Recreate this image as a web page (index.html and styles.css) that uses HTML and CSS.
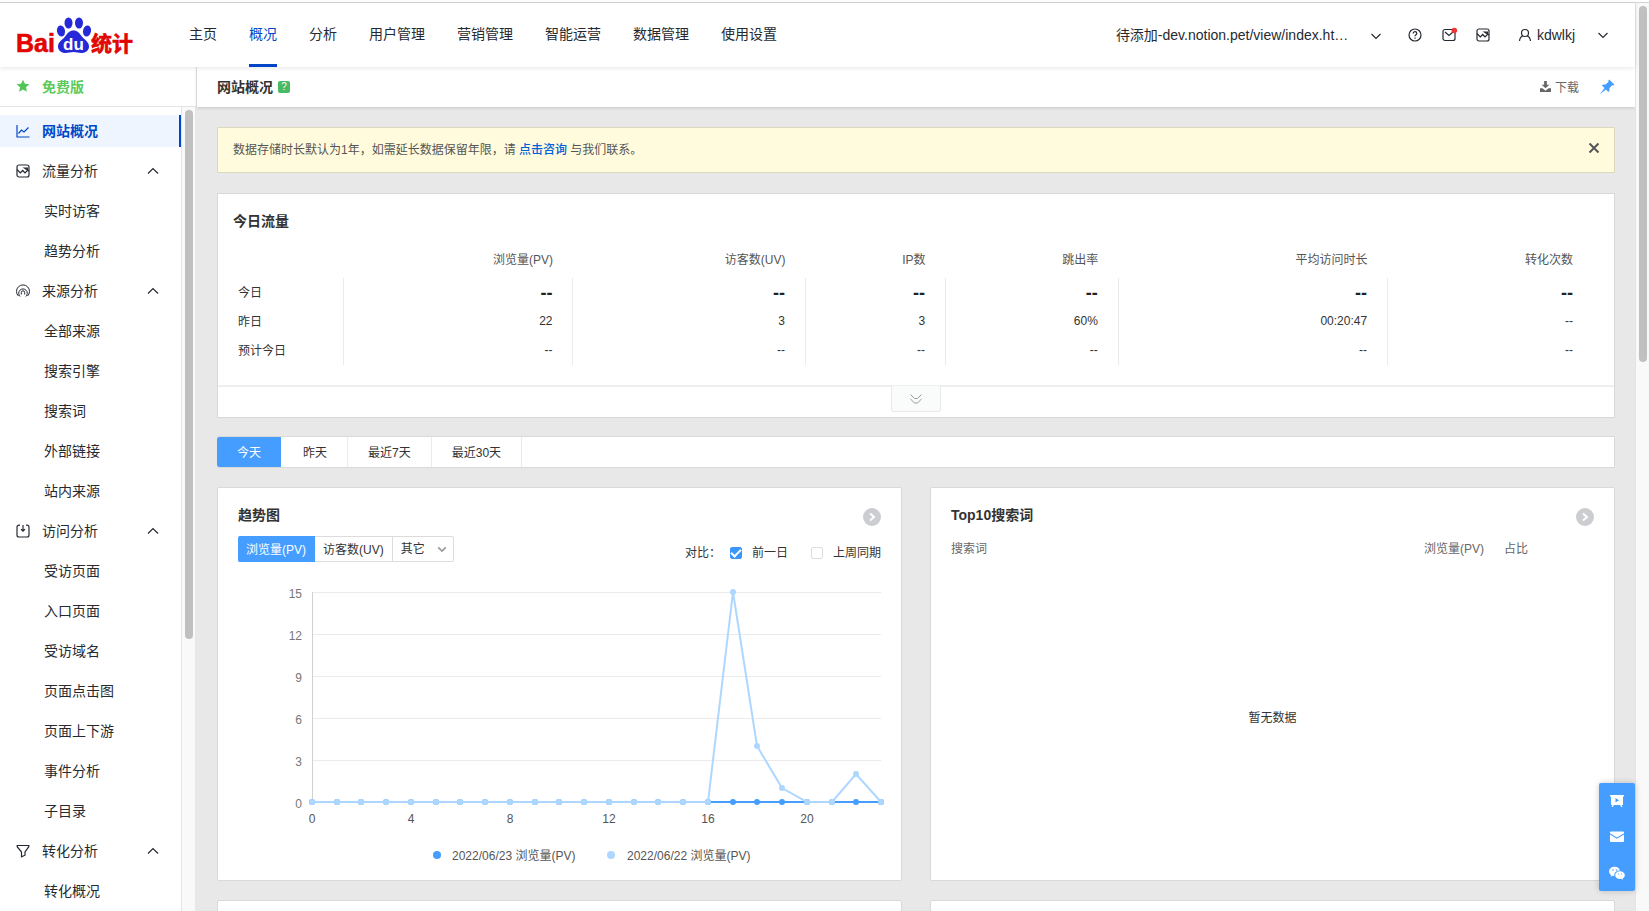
FILE: index.html
```
<!DOCTYPE html>
<html lang="zh-CN">
<head>
    <meta charset="UTF-8">
    <meta name="viewport" content="width=device-width, initial-scale=1.0">
    <title>百度统计 - 网站概况</title>
    <link rel="stylesheet" href="styles.css">
</head>
<body>
    <!-- shared icons -->
    <svg class="sprite" aria-hidden="true">
        <symbol id="up" viewBox="0 0 12 12"><path d="M1 8.500 6 3.500l5 5"/></symbol>
        <symbol id="down" viewBox="0 0 12 12"><path d="M1.500 4 6 8.500 10.500 4"/></symbol>
        <symbol id="board" viewBox="0 0 14 14"><rect x="1" y="1" width="12" height="12" rx="2"/><path d="M1 5.500l3.300 3.500 2.400-2.500L9 9l2.500-2.500V4H8.500l4.500 3"/></symbol>
    </svg>
    <div class="window">
        <div class="app">
            <header class="header">
                <a class="logo" href="#" aria-label="百度统计">
                    <svg width="124" height="46" viewBox="0 0 124 46">
                        <text class="logo-red" x="0" y="37" font-size="25">Bai</text>
                        <g fill="#2529d8">
                            <ellipse cx="45" cy="16" rx="4" ry="5.500" transform="rotate(-12 45 16)"/>
                            <ellipse cx="52.500" cy="8" rx="4" ry="5.500"/>
                            <ellipse cx="63" cy="8" rx="4" ry="5.500"/>
                            <ellipse cx="71" cy="16" rx="4" ry="5.500" transform="rotate(12 71 16)"/>
                            <path d="M57.500 15.500c4 0 6 2.500 8 5.500 2.500 3.500 7.500 5.500 7.500 10.500 0 4-3.500 6.500-7.500 6.500-3 0-5-1-8-1s-5 1-8 1c-4 0-7.500-2.500-7.500-6.500 0-5 5-7 7.500-10.500 2-3 4-5.500 8-5.500z"/>
                        </g>
                        <text class="logo-du" x="47" y="35" font-size="17">du</text>
                        <text class="logo-red" x="75" y="36" font-size="21">统计</text>
                    </svg>
                </a>
                <nav class="nav">
                    <a href="#">主页</a>
                    <a href="#" class="active">概况</a>
                    <a href="#">分析</a>
                    <a href="#">用户管理</a>
                    <a href="#">营销管理</a>
                    <a href="#">智能运营</a>
                    <a href="#">数据管理</a>
                    <a href="#">使用设置</a>
                </nav>
                <div class="tools">
                    <div class="site">
                        <select aria-label="站点"><option>待添加-dev.notion.pet/view/index.ht…</option></select>
                        <svg class="icon arrow"><use href="#down"/></svg>
                    </div>
                    <button class="tool" aria-label="帮助">
                        <svg class="icon" viewBox="0 0 14 14"><circle cx="7" cy="7" r="6"/><path d="M5.200 5.500C5.200 3 8.800 3.200 8.800 5.400 8.800 6.800 7 6.700 7 8.300M7 9.500v1.200"/></svg>
                    </button>
                    <button class="tool" aria-label="消息">
                        <svg class="icon" viewBox="0 0 14 14"><rect x="1" y="1.500" width="12" height="11" rx="2"/><path d="M3 4l4 3.500L11 4"/><circle class="red-dot" cx="12.300" cy="2.500" r="2.800"/></svg>
                    </button>
                    <button class="tool" aria-label="看板"><svg class="icon"><use href="#board"/></svg></button>
                    <button class="user">
                        <svg class="icon" viewBox="0 0 14 14"><circle cx="7" cy="5" r="3.500"/><path d="M1.500 13c.3-3 1.600-4.500 3.500-5.200M12.500 13c-.3-3-1.600-4.500-3.500-5.200"/></svg>
                        <span>kdwlkj</span>
                        <svg class="icon arrow"><use href="#down"/></svg>
                    </button>
                </div>
            </header>
            <div class="body">
                <aside class="sidebar">
                    <div class="plan">
                        <svg class="star" viewBox="0 0 14 14"><path d="M7 .8l1.900 4 4.400.5-3.300 3 .9 4.400L7 10.500l-3.900 2.200.9-4.400-3.300-3 4.400-.5z"/></svg>
                        免费版
                    </div>
                    <div class="side-scroll">
                        <nav class="menu">
                            <a href="#" class="group active"><svg class="icon" viewBox="0 0 14 14"><path d="M1 1v12h12.500M2.500 9.500l3-3.500 2.500 2 4.500-4.500"/></svg>网站概况</a>
                            <a href="#" class="group"><svg class="icon"><use href="#board"/></svg>流量分析<svg class="icon fold"><use href="#up"/></svg></a>
                            <a href="#">实时访客</a>
                            <a href="#">趋势分析</a>
                            <a href="#" class="group"><svg class="icon thin" viewBox="0 0 14 14"><path d="M2.400 12A6.500 6.500 0 1 1 11.600 12M4.200 12.500A4.300 4.300 0 1 1 9.800 12.500M5.300 10.500V8.500a1.700 1.700 0 0 1 3.400 0v2"/></svg>来源分析<svg class="icon fold"><use href="#up"/></svg></a>
                            <a href="#">全部来源</a>
                            <a href="#">搜索引擎</a>
                            <a href="#">搜索词</a>
                            <a href="#">外部链接</a>
                            <a href="#">站内来源</a>
                            <a href="#" class="group"><svg class="icon" viewBox="0 0 14 14"><path d="M4 1.200H3a2 2 0 0 0-2 2V11a2 2 0 0 0 2 2h8a2 2 0 0 0 2-2V3.200a2 2 0 0 0-2-2h-1M7 1v6M5 5.200l2 2 2-2"/></svg>访问分析<svg class="icon fold"><use href="#up"/></svg></a>
                            <a href="#">受访页面</a>
                            <a href="#">入口页面</a>
                            <a href="#">受访域名</a>
                            <a href="#">页面点击图</a>
                            <a href="#">页面上下游</a>
                            <a href="#">事件分析</a>
                            <a href="#">子目录</a>
                            <a href="#" class="group"><svg class="icon" viewBox="0 0 14 14"><path d="M1.200 1.500h11.600v1.200L9 8v3.200l-3.500 1.600V8L1.200 2.700z"/></svg>转化分析<svg class="icon fold"><use href="#up"/></svg></a>
                            <a href="#">转化概况</a>
                        </nav>
                        <div class="track"><div class="thumb"></div></div>
                    </div>
                </aside>
                <main class="main">
                    <div class="titlebar">
                        <h1>网站概况</h1>
                        <button class="help" aria-label="说明">?</button>
                        <button class="download">
                            <svg viewBox="0 0 12 12"><path d="M4.500 0h3v4h2.700L6 8 1.800 4h2.700zM0 8h2.700L6 10.500 9.300 8H12v4H0z"/></svg>
                            下载
                        </button>
                        <button class="pin" aria-label="固定">
                            <svg viewBox="0 0 16 16"><path d="M10.200.5l5.300 5.300-1.400.8-1-.3-2.700 2.900c.3 1.600 0 2.900-.9 3.900L6.800 10.400 .6 15.600 5.500 9.100 2.700 6.300c1.100-.8 2.400-1.100 4-.8l2.800-2.800-.2-1z"/></svg>
                        </button>
                    </div>
                    <div class="content">
                        <div class="notice">
                            <p>数据存储时长默认为1年，如需延长数据保留年限，请 <a href="#">点击咨询</a> 与我们联系。</p>
                            <button aria-label="关闭"><svg viewBox="0 0 12 12"><path d="M1.500 1.500l9 9M10.500 1.500l-9 9"/></svg></button>
                        </div>

                        <section class="card summary">
                            <h2>今日流量</h2>
                            <table class="flow">
                                <colgroup><col class="c-label"><col class="c-pv"><col class="c-uv"><col class="c-ip"><col class="c-bounce"><col class="c-time"><col></colgroup>
                                <thead>
                                    <tr><td></td><th>浏览量(PV)</th><th>访客数(UV)</th><th>IP数</th><th>跳出率</th><th>平均访问时长</th><th>转化次数</th></tr>
                                </thead>
                                <tbody>
                                    <tr class="today"><th>今日</th><td>--</td><td>--</td><td>--</td><td>--</td><td>--</td><td>--</td></tr>
                                    <tr><th>昨日</th><td>22</td><td>3</td><td>3</td><td>60%</td><td>00:20:47</td><td>--</td></tr>
                                    <tr><th>预计今日</th><td>--</td><td>--</td><td>--</td><td>--</td><td>--</td><td>--</td></tr>
                                </tbody>
                            </table>
                            <div class="expand">
                                <button aria-label="展开"><svg viewBox="0 0 12 12"><path d="M.5 1.500l4 4h3l4-4M.5 6l4 4h3l4-4"/></svg></button>
                            </div>
                        </section>

                        <div class="tabs">
                            <button class="active">今天</button>
                            <button>昨天</button>
                            <button>最近7天</button>
                            <button>最近30天</button>
                        </div>

                        <div class="panels">
                            <section class="card panel">
                                <div class="panel-head">
                                    <h2>趋势图</h2>
                                    <a class="more" href="#" aria-label="更多"><svg viewBox="0 0 18 18"><path d="M7 5.500l4 3.500-4 3.500"/></svg></a>
                                </div>
                                <div class="options">
                                    <div class="metrics">
                                        <button class="active">浏览量(PV)</button>
                                        <button>访客数(UV)</button>
                                        <div class="other">
                                            <select aria-label="其它指标"><option>其它</option></select>
                                            <svg class="icon"><use href="#down"/></svg>
                                        </div>
                                    </div>
                                    <div class="compare">
                                        <span>对比：</span>
                                        <label><input type="checkbox" checked>前一日</label>
                                        <label><input type="checkbox">上周同期</label>
                                    </div>
                                </div>
                                <svg class="chart" id="chart" viewBox="0 0 643 300">
                                    <g id="grid"></g>
                                    <g id="lines"></g>
                                    <circle cx="199" cy="285" r="4" fill="#459dff"/>
                                    <text x="214" y="290">2022/06/23 浏览量(PV)</text>
                                    <circle cx="373" cy="285" r="4" fill="#aed7ff"/>
                                    <text x="389" y="290">2022/06/22 浏览量(PV)</text>
                                </svg>
                            </section>
                            <section class="card panel">
                                <div class="panel-head">
                                    <h2>Top10搜索词</h2>
                                    <a class="more" href="#" aria-label="更多"><svg viewBox="0 0 18 18"><path d="M7 5.500l4 3.500-4 3.500"/></svg></a>
                                </div>
                                <table class="words">
                                    <thead><tr><th>搜索词</th><th class="w-pv">浏览量(PV)</th><th class="w-ratio">占比</th></tr></thead>
                                </table>
                                <p class="empty">暂无数据</p>
                            </section>
                            <section class="card panel"></section>
                            <section class="card panel"></section>
                        </div>
                    </div>
                </main>
            </div>
            <div class="float">
                <button aria-label="视频教程"><svg viewBox="0 0 16 16"><path d="M1 2h14v1.500h-1V12h-1.500l1 2h-1.300l-1.200-2H5l-1.200 2H2.500l1-2H2V3.500H1zM6.500 5v4.500L10 7.300z" fill-rule="evenodd"/></svg></button>
                <button aria-label="邮件"><svg viewBox="0 0 16 16"><path d="M2 2.500h12a1 1 0 0 1 1 1v.8L8 8.500 1 4.300v-.8a1 1 0 0 1 1-1zM1 5.500l7 4.200 7-4.200V12a1 1 0 0 1-1 1H2a1 1 0 0 1-1-1z"/></svg></button>
                <button aria-label="微信"><svg viewBox="0 0 16 16"><path d="M5.700 1.800C2.600 1.800.1 3.800.1 6.500c0 1.500.8 2.800 2 3.600l-.5 1.700 2-1 1.700.3C4.800 7.700 7.500 5.400 11 5.500 10.500 3.300 8.300 1.800 5.700 1.800zM4 4.200a.8.8 0 1 1 0 1.600.8.800 0 0 1 0-1.600zM7.500 4.200a.8.8 0 1 1 0 1.600.8.800 0 0 1 0-1.600z"/><path d="M11 6.300c-2.700 0-4.800 1.700-4.800 3.900S8.300 14 11 14l1.500-.2 1.700.9-.4-1.500c1.200-.7 2-1.800 2-3 0-2.200-2.100-3.900-4.800-3.900zM9.400 8.400a.6.6 0 1 1 0 1.200.6.6 0 0 1 0-1.200zM12.600 8.400a.6.6 0 1 1 0 1.200.6.6 0 0 1 0-1.200z"/></svg></button>
            </div>
        </div>
        <div class="track page-track"><div class="thumb"></div></div>
    </div>
    <script>
        const today = new Array(24).fill(0);
        const yesterday = [0, 0, 0, 0, 0, 0, 0, 0, 0, 0, 0, 0, 0, 0, 0, 0, 0, 15, 4, 1, 0, 0, 2, 0];
        const left = 74, right = 643, bottom = 232, unit = 14;
        const px = i => Math.round(left + i * (right - left) / 23);
        const py = v => bottom - v * unit;

        let grid = '';
        for (let v = 0; v <= 15; v += 3) {
            grid += `<path class="grid-line" d="M${left} ${py(v) + 0.5}H${right}"/>`;
            grid += `<text class="y-label" x="64" y="${py(v) + 6}">${v}</text>`;
        }
        for (let h = 0; h < 24; h += 4) {
            grid += `<text class="x-label" x="${px(h)}" y="253">${h}</text>`;
        }
        grid += `<path class="axis" d="M${left + 0.5} ${py(15)}V${bottom}"/>`;
        document.getElementById('grid').innerHTML = grid;

        function drawLine(data, color) {
            const points = data.map((v, i) => `${px(i)},${py(v)}`).join(' ');
            const dots = data.map((v, i) => `<circle cx="${px(i)}" cy="${py(v)}" r="3" fill="${color}"/>`).join('');
            return `<polyline points="${points}" fill="none" stroke="${color}" stroke-width="2"/>` + dots;
        }
        document.getElementById('lines').innerHTML = drawLine(today, '#459dff') + drawLine(yesterday, '#aed7ff');
    </script>
</body>
</html>
```
FILE: styles.css
```
* { box-sizing: border-box; margin: 0; padding: 0; }
body {
    font-family: "Liberation Sans", "Noto Sans CJK SC", sans-serif;
    font-size: 12px;
    color: #333;
    background: #fff;
}
button, select, input { font: inherit; color: inherit; }
button { background: none; border: none; cursor: pointer; }
select { appearance: none; background: none; border: none; outline: none; }
a { color: inherit; text-decoration: none; }
h1, h2 { font-size: 14px; line-height: 20px; font-weight: bold; }
th { font-weight: normal; }
svg { display: block; flex: none; }
.sprite { position: absolute; width: 0; height: 0; }
.icon { width: 14px; height: 14px; fill: none; stroke: currentColor; stroke-width: 1.2; overflow: visible; }
.thin { stroke-width: 1; }

.window {
    display: flex;
    height: 100vh;
    padding-top: 2px;
    overflow: hidden;
}
.app {
    flex: 1;
    min-width: 0;
    display: flex;
    flex-direction: column;
    border-top: 1px solid #d4d4d4;
}
.track {
    width: 14px;
    flex: none;
    padding: 3px 2px 0 3px;
    background: #f9f9f9;
    border-left: 1px solid #e4e4e4;
}
.thumb { height: 529px; width: 8px; border-radius: 4px; background: #c0c0c0; }
.page-track { border-top: 1px solid #d4d4d4; }
.page-track .thumb { height: 356px; }

/* header */
.header {
    display: flex;
    height: 64px;
    flex: none;
    padding: 0 26px 0 16px;
    font-size: 14px;
    color: #252a31;
    background: #fff;
    box-shadow: 0 1px 5px rgba(0,0,0,0.1);
    position: relative;
    z-index: 2;
}
.logo { padding-top: 12px; width: 173px; }
.logo-red { fill: #e10602; font-weight: bold; stroke: #e10602; stroke-width: 0.6; }
.logo-du { fill: #fff; font-weight: bold; }
.nav { display: flex; gap: 32px; }
.nav a { padding-top: 2px; line-height: 59px; border-bottom: 3px solid transparent; white-space: nowrap; }
.nav a.active { color: #0047c8; border-color: #0047c8; }
.tools { display: flex; align-items: center; margin-left: auto; padding-bottom: 1px; }
.site { position: relative; margin-right: 26px; }
.site select { width: 266px; height: 32px; padding-right: 20px; }
.arrow { width: 12px; height: 12px; }
.site .arrow { position: absolute; right: 0; top: 11px; pointer-events: none; }
.tool { margin-right: 20px; }
.user { display: flex; align-items: center; margin-left: 8px; }
.user span { margin: 0 22px 0 5px; }
.red-dot { fill: #f03232; stroke: none; }

/* sidebar */
.body { flex: 1; min-height: 0; display: flex; }
.sidebar { width: 197px; flex: none; display: flex; flex-direction: column; background: #e8e8e8; }
.plan {
    display: flex;
    align-items: center;
    height: 40px;
    flex: none;
    gap: 12px;
    padding: 0 16px 1px;
    font-size: 14px;
    font-weight: bold;
    color: #5bcb5b;
    background: #fff;
    border-right: 1px solid #e4e4e4;
    border-bottom: 1px solid #e4e4e4;
}
.star { width: 14px; height: 14px; fill: #50c657; }
.side-scroll { flex: 1; min-height: 0; display: flex; padding-right: 2px; }
.menu {
    flex: 1;
    display: flex;
    flex-direction: column;
    gap: 8px;
    padding-top: 8px;
    overflow: hidden;
    font-size: 14px;
    color: #252a31;
    background: #fff;
}
.menu a { height: 32px; line-height: 32px; flex: none; padding-left: 44px; }
.menu .group { display: flex; align-items: center; gap: 12px; padding: 0 22px 0 16px; }
.menu .active { color: #0047c8; font-weight: bold; background: #eef5ff; border-right: 2px solid #0047c8; }
.menu .fold { width: 12px; height: 12px; margin-left: auto; }

/* main */
.main { flex: 1; min-width: 0; display: flex; flex-direction: column; background: #e8e8e8; }
.titlebar {
    display: flex;
    align-items: center;
    height: 40px;
    flex: none;
    padding: 0 20px 1px;
    background: #fff;
    box-shadow: 0 1px 3px rgba(0,0,0,0.15);
}
.help { width: 12px; height: 12px; margin-left: 5px; border-radius: 2px; background: #46ba65; color: #fff; font-size: 10px; line-height: 12px; }
.download { display: flex; align-items: center; gap: 4px; margin-left: auto; margin-right: 20px; color: #666; }
.download svg { width: 11px; height: 11px; fill: #666; }
.pin svg { width: 16px; height: 16px; fill: #459dff; }
.content { flex: 1; min-height: 0; padding: 20px; overflow: hidden; }
.card { background: #fff; border: 1px solid #d9d9d9; }

.notice {
    display: flex;
    justify-content: space-between;
    margin-bottom: 20px;
    padding: 0 14px 0 15px;
    line-height: 44px;
    color: #555;
    background: #fffbdc;
    border: 1px solid #dbd8bf;
}
.notice a { color: #0060d8; font-weight: 500; }
.notice button { height: 40px; }
.notice svg { width: 12px; height: 12px; stroke: #555; stroke-width: 2; }

.summary { margin-bottom: 18px; padding-top: 17px; }
.summary h2 { margin: 0 15px 11px; }
.flow { width: calc(100% - 36px); margin: 0 21px 20px 15px; table-layout: fixed; border-collapse: collapse; }
.c-label { width: 8.1%; }
.c-pv { width: 16.9%; }
.c-uv { width: 17.1%; }
.c-ip { width: 10.3%; }
.c-bounce { width: 12.7%; }
.c-time { width: 19.8%; }
.flow thead th { height: 36px; padding: 0 20px 3px 0; text-align: right; color: #555; }
.flow tbody th { height: 29px; padding: 0 0 2px 5px; text-align: left; }
.flow tbody td { height: 29px; padding: 0 20px 2px 0; text-align: right; border-left: 1px solid #ebebeb; }
.flow .today td { padding-bottom: 0; font-size: 18px; line-height: 20px; font-weight: bold; color: #222; }
.expand { display: flex; justify-content: center; height: 32px; border-top: 2px solid #eee; }
.expand button {
    display: flex;
    align-items: center;
    justify-content: center;
    width: 50px;
    height: 26px;
    margin-top: -1px;
    background: #fafcfb;
    border: 1px solid #e9e9e9;
    border-top: none;
    border-radius: 0 0 3px 3px;
}
.expand svg { width: 12px; height: 12px; fill: none; stroke: #999; }

.tabs { display: flex; margin-bottom: 19px; background: #fff; border: 1px solid #d9d9d9; border-left: none; }
.tabs button { height: 30px; padding: 0 20px 2px; border-right: 1px solid #ebebeb; }
.tabs .active { margin-right: 2px; color: #fff; background: #459dff; border: none; border-radius: 2px 0 0 2px; }

.panels { display: grid; grid-template-columns: 1fr 1fr; gap: 19px 28px; }
.panel { display: flex; flex-direction: column; min-height: 200px; padding: 17px 20px 10px; border-radius: 2px; }
.panel-head { display: flex; justify-content: space-between; height: 21px; margin-bottom: 10px; }
.more { align-self: flex-end; width: 18px; height: 18px; border-radius: 50%; background: #cccdd1; }
.more svg { width: 18px; height: 18px; fill: none; stroke: #fff; stroke-width: 2; }
.options { display: flex; justify-content: space-between; align-items: flex-end; margin-bottom: 8px; }
.metrics { display: flex; }
.metrics button { height: 26px; padding: 0 8px 2px; border: 1px solid #dcdcdc; border-left: none; }
.metrics .active { color: #fff; background: #459dff; border-color: #459dff; border-radius: 2px 0 0 2px; }
.other { position: relative; }
.other select { width: 61px; height: 26px; padding-left: 8px; border: 1px solid #dcdcdc; border-left: none; border-radius: 0 2px 2px 0; }
.other .icon { position: absolute; right: 7px; top: 8px; width: 10px; height: 10px; color: #999; stroke-width: 2; pointer-events: none; }
.compare { display: flex; line-height: 18px; }
.compare label { display: flex; align-items: center; }
.compare label + label { margin-left: 23px; }
.compare span { margin-right: 9px; }
.compare input {
    appearance: none;
    width: 12px;
    height: 12px;
    margin-right: 10px;
    border: 1px solid #dcdcdc;
    border-radius: 2px;
    display: grid;
    place-items: center;
}
.compare input:checked { background: #3c97fc; border-color: #3c97fc; }
.compare input:checked::after {
    content: "";
    width: 8px;
    height: 4px;
    margin-bottom: 2px;
    border-left: 2px solid #fff;
    border-bottom: 2px solid #fff;
    transform: rotate(-45deg);
}

.chart { width: 100%; height: auto; overflow: visible; font-size: 12px; fill: #555; }
.grid-line { stroke: #ebebeb; }
.axis { stroke: #d0d0d0; }
.y-label { text-anchor: end; fill: #777; }
.x-label { text-anchor: middle; }

.words { width: 100%; border-collapse: collapse; line-height: 26px; color: #666; }
.words th { text-align: left; }
.words .w-pv { width: 84px; text-align: right; }
.words .w-ratio { width: 110px; padding-left: 20px; }
.empty { flex: 1; display: flex; align-items: center; justify-content: center; }

/* floating contact buttons */
.float {
    position: fixed;
    right: 14px;
    bottom: 20px;
    width: 36px;
    border-radius: 2px;
    background: #459dff;
    box-shadow: 0 0 6px rgba(0,0,0,0.2);
}
.float button { display: flex; align-items: center; justify-content: center; width: 36px; height: 36px; }
.float svg { width: 16px; height: 16px; fill: #fff; }
```
